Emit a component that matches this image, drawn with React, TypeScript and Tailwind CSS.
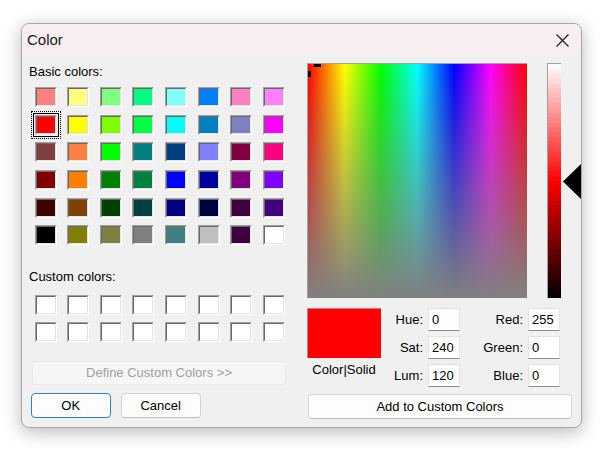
import React from "react";

const BASIC: string[] = [
  "#FF8080", "#FFFF80", "#80FF80", "#00FF80", "#80FFFF", "#0080FF", "#FF80C0", "#FF80FF",
  "#FF0000", "#FFFF00", "#80FF00", "#00FF40", "#00FFFF", "#0080C0", "#8080C0", "#FF00FF",
  "#804040", "#FF8040", "#00FF00", "#008080", "#004080", "#8080FF", "#800040", "#FF0080",
  "#800000", "#FF8000", "#008000", "#008040", "#0000FF", "#0000A0", "#800080", "#8000FF",
  "#400000", "#804000", "#004000", "#004040", "#000080", "#000040", "#400040", "#400080",
  "#000000", "#808000", "#808040", "#808080", "#408080", "#C0C0C0", "#400040", "#FFFFFF",
];

function Swatch({ color, selected }: { color: string; selected?: boolean }) {
  return (
    <div className="relative w-[22px] h-[20px]">
      {selected && (
        <>
          <div className="absolute -inset-[4px] border border-dotted border-black" />
          <div className="absolute -inset-[2px] border border-black" />
        </>
      )}
      <div className="relative w-full h-full border-t border-l border-[#a0a0a0] border-b border-r border-b-white border-r-white">
        <div className="w-full h-full border-t border-l border-[#696969] border-b border-r border-b-[#e3e3e3] border-r-[#e3e3e3]">
          <div className="w-full h-full" style={{ backgroundColor: color }} />
        </div>
      </div>
    </div>
  );
}

function hslToRgb(h: number, s: number, l: number): string {
  const a = s * Math.min(l, 1 - l);
  const f = (n: number) => {
    const k = (n + h / 30) % 12;
    const c = l - a * Math.max(-1, Math.min(k - 3, 9 - k, 1));
    return Math.round(c * 255);
  };
  return `rgb(${f(0)},${f(8)},${f(4)})`;
}

const LUM_STEPS = Array.from({ length: 48 }, (_, i) => hslToRgb(0, 1, 1 - (i + 0.5) / 48));

function Field({ label, value, labelW }: { label: string; value: string; labelW: string }) {
  return (
    <div className="flex items-center h-[23px]">
      <div className={`${labelW} text-right pr-[5px] text-black`}>{label}</div>
      <div className="w-[32px] h-[23px] bg-white border border-[#e2e2e2] border-b-[#8c8c8c] pl-[3px] leading-[21px] text-black">
        {value}
      </div>
    </div>
  );
}

export default function App() {
  return (
    <div className="w-[606px] h-[450px] bg-white overflow-hidden" style={{ fontFamily: '"Liberation Sans", Arial, sans-serif' }}>
      <div className="ml-[21px] mt-[23px] w-[561px] h-[405px] border border-[#a8a8a8] rounded-[8px] overflow-hidden bg-[#f0f0f0] shadow-[0_4px_18px_rgba(0,0,0,0.28)] text-[13px] leading-[16px]">
        {/* Title bar */}
        <div className="h-[30px] bg-[#f8eef2] flex items-center justify-between pl-[5px] pr-[12px]">
          <span className="text-[15px] text-[#1a1a1a] mt-[2px]">Color</span>
          <svg width="13" height="13" viewBox="0 0 13 13" className="mt-[2px]">
            <path d="M0.5 0.5 L12.5 12.5 M12.5 0.5 L0.5 12.5" stroke="#1c1c1c" strokeWidth="1.2" />
          </svg>
        </div>
        {/* Body */}
        <div className="flex pl-[7px] pt-[9px]">
          {/* Left column */}
          <div className="w-[278px] flex flex-col">
            <div className="mt-[1px] text-black">Basic colors:</div>
            <div className="mt-[7px] ml-[5.5px] grid grid-cols-[repeat(8,22px)] gap-x-[10.67px] gap-y-[7.67px]">
              {BASIC.map((c, i) => (
                <Swatch key={i} color={c} selected={i === 8} />
              ))}
            </div>
            <div className="mt-[23.7px] text-black">Custom colors:</div>
            <div className="mt-[10px] ml-[5.5px] grid grid-cols-[repeat(8,22px)] gap-x-[10.67px] gap-y-[7px]">
              {Array.from({ length: 16 }).map((_, i) => (
                <Swatch key={i} color="#FFFFFF" />
              ))}
            </div>
            <div className="mt-[19.3px] ml-[3px] w-[254px] h-[24px] rounded-[4px] bg-[#f6f6f6] border border-[#eaeaea] flex items-center justify-center text-[#a0a0a0]">
              Define Custom Colors &gt;&gt;
            </div>
            <div className="mt-[8px] ml-[1.7px] flex gap-[10px]">
              <div className="w-[80px] h-[25px] rounded-[4px] bg-[#fdfdfd] border-[1.5px] border-[#2b7fd6] flex items-center justify-center text-black">
                OK
              </div>
              <div className="w-[80px] h-[25px] rounded-[4px] bg-[#fdfdfd] border border-[#d4d4d4] border-b-[#bdbdbd] flex items-center justify-center text-black">
                Cancel
              </div>
            </div>
          </div>
          {/* Right column */}
          <div className="flex flex-col">
            <div className="flex">
              <div className="relative w-[220px] h-[235px] border-t border-l border-[#a0a0a0] overflow-hidden">
                <svg width="219" height="234" className="block">
                  <defs>
                    <linearGradient id="hue" x1="0" y1="0" x2="1" y2="0">
                      <stop offset="0" stopColor="#ff0000" />
                      <stop offset="0.1667" stopColor="#ffff00" />
                      <stop offset="0.3333" stopColor="#00ff00" />
                      <stop offset="0.5" stopColor="#00ffff" />
                      <stop offset="0.6667" stopColor="#0000ff" />
                      <stop offset="0.8333" stopColor="#ff00ff" />
                      <stop offset="1" stopColor="#ff0000" />
                    </linearGradient>
                    <linearGradient id="sat" x1="0" y1="0" x2="0" y2="1">
                      <stop offset="0" stopColor="#808080" stopOpacity="0" />
                      <stop offset="1" stopColor="#808080" stopOpacity="1" />
                    </linearGradient>
                  </defs>
                  <rect x="0" y="0" width="219" height="234" fill="url(#hue)" />
                  <rect x="0" y="0" width="219" height="234" fill="url(#sat)" />
                </svg>
                <div className="absolute left-[6px] top-0 w-[7px] h-[3px] bg-black" />
                <div className="absolute left-0 top-[7px] w-[3px] h-[6px] bg-black" />
              </div>
              <div className="relative ml-[20px] w-[14px] h-[235px]">
                <div className="w-full h-full border-t border-l border-[#a0a0a0] flex flex-col overflow-hidden">
                  {LUM_STEPS.map((c, i) => (
                    <div key={i} className="flex-1" style={{ backgroundColor: c }} />
                  ))}
                </div>
                <svg width="18" height="35" viewBox="0 0 18 35" className="absolute left-[16px] top-[101px]">
                  <polygon points="0,17.5 18,0 18,35" fill="#000" />
                </svg>
              </div>
            </div>
            <div className="mt-[10px] flex">
              <div className="w-[74px] flex flex-col items-center">
                <div className="w-[74px] h-[50px] bg-[#ff0000] border-t border-l border-[#c08080]" />
                <div className="mt-[4px] text-black">Color|Solid</div>
              </div>
              <div className="flex flex-col gap-[5px]">
                <Field label="Hue:" value="0" labelW="w-[47px]" />
                <Field label="Sat:" value="240" labelW="w-[47px]" />
                <Field label="Lum:" value="120" labelW="w-[47px]" />
              </div>
              <div className="flex flex-col gap-[5px]">
                <Field label="Red:" value="255" labelW="w-[68px]" />
                <Field label="Green:" value="0" labelW="w-[68px]" />
                <Field label="Blue:" value="0" labelW="w-[68px]" />
              </div>
            </div>
            <div className="mt-[7px] ml-[1px] w-[264px] h-[25px] rounded-[4px] bg-[#fdfdfd] border border-[#d4d4d4] border-b-[#bdbdbd] flex items-center justify-center text-black">
              Add to Custom Colors
            </div>
          </div>
        </div>
      </div>
    </div>
  );
}
